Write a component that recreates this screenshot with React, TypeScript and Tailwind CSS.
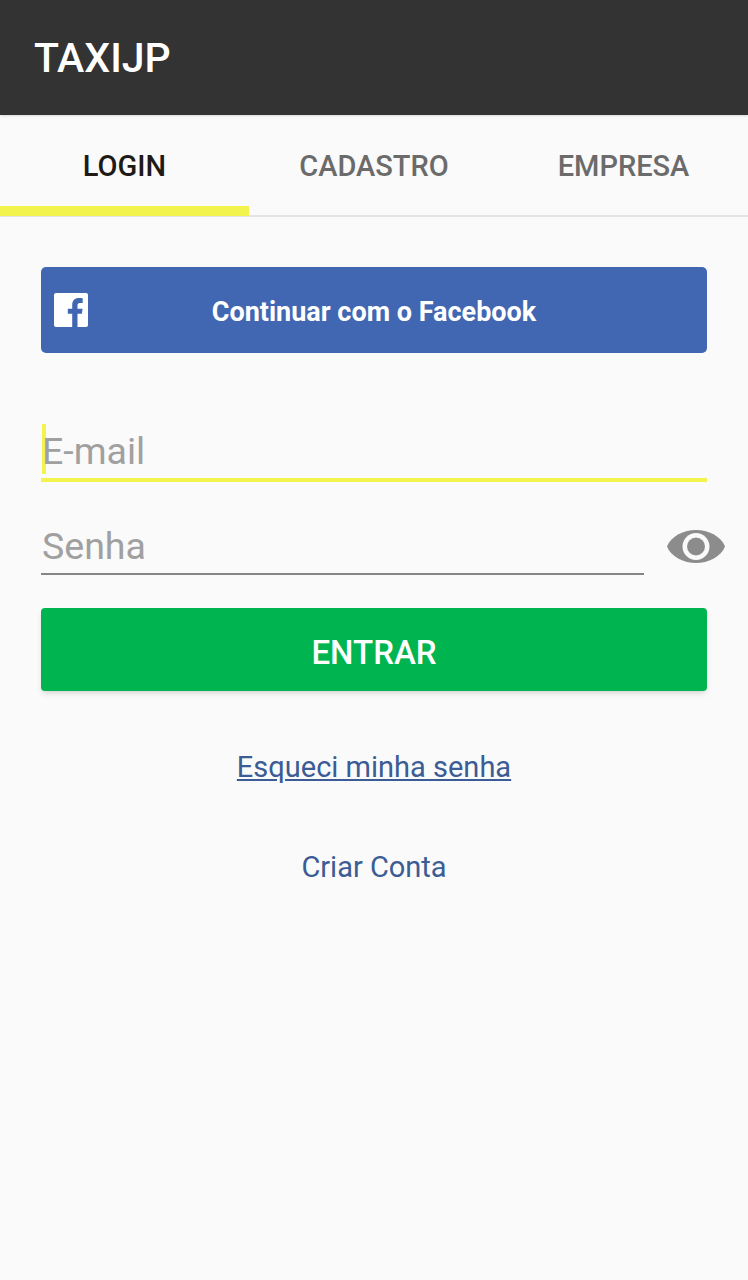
import React from 'react';

function FacebookIcon() {
  return (
    <svg width="34" height="34" viewBox="0 0 34 34" className="absolute left-[13px] top-[26px]">
      <path
        fill="#fff"
        d="M2 0h30a2 2 0 0 1 2 2v30a2 2 0 0 1-2 2h-8.500V20.800h4.400l.7-5.100h-5.100v-3.300c0-1.500.4-2.500 2.500-2.500h2.700V5.300c-.5-.1-2.100-.2-3.900-.2-3.900 0-6.600 2.400-6.600 6.800v3.800h-4.400v5.100h4.400V34H2a2 2 0 0 1-2-2V2a2 2 0 0 1 2-2z"
      />
    </svg>
  );
}

function EyeIcon() {
  return (
    <svg width="58" height="33" viewBox="0 0 58 33" className="block shrink-0">
      <path fill="#8c8c8c" d="M0 16.500C4 6 17 0 29 0s25 6 29 16.500C54 27 41 33 29 33S4 27 0 16.500z" />
      <circle cx="29" cy="16.500" r="13.500" fill="#fafafa" />
      <circle cx="29" cy="16.500" r="9" fill="#8c8c8c" />
    </svg>
  );
}

export default function App() {
  const font = { fontFamily: 'Roboto, "Liberation Sans", sans-serif' };

  return (
    <div className="min-h-[1280px] bg-[#fafafa]" style={font}>
      <header className="flex h-[115px] items-center bg-[#333333] pl-[34px] pt-[2px] shadow-sm">
        <h1 className="text-[41px] font-medium text-white">TAXIJP</h1>
      </header>

      <nav className="flex h-[102px] border-b-2 border-[#e4e4e4]">
        <div className="flex h-[101px] w-[249px] items-center justify-center border-b-[10px] border-[#f2f34c] pt-[12px] text-[29px] font-medium text-[#1f1a17]">
          LOGIN
        </div>
        <div className="flex w-[250px] items-center justify-center pt-[3px] text-[29px] font-medium text-[#6b6b6b]">
          CADASTRO
        </div>
        <div className="flex w-[249px] items-center justify-center pt-[3px] text-[29px] font-medium text-[#6b6b6b]">
          EMPRESA
        </div>
      </nav>

      <main className="flex flex-col px-[41px] pt-[50px]">
        <button className="relative flex h-[86px] w-[666px] items-center justify-center rounded-[5px] bg-[#4267b2] pt-[5px] text-[27px] font-bold text-white">
          <FacebookIcon />
          Continuar com o Facebook
        </button>

        <div className="relative mt-[71px] flex h-[58px] w-[666px] items-center border-b-4 border-[#f2f34c] pl-[1px] text-[37.500px] text-[#a0a0a0]">
          <span className="absolute left-[1px] top-0 h-[50px] w-[4px] bg-[#f2f34c]" />
          <span className="relative">E-mail</span>
        </div>

        <div className="mt-[44px] flex items-center">
          <div className="flex h-[49px] w-[603px] shrink-0 items-center border-b-2 border-[#858585] pb-[7px] pl-[1px] text-[37.500px] text-[#a0a0a0]">
            Senha
          </div>
          <div className="mb-[8px] ml-[23px] shrink-0">
            <EyeIcon />
          </div>
        </div>

        <button className="mt-[33px] flex h-[83px] w-[666px] items-center justify-center rounded-[4px] bg-[#00b54f] pt-[6px] text-[33px] font-medium text-white shadow-md">
          ENTRAR
        </button>

        <a className="mt-[57px] self-center text-[29px] leading-[38px] text-[#3b5c94] underline">
          Esqueci minha senha
        </a>

        <a className="mt-[62px] self-center text-[29px] leading-[38px] text-[#3b5c94]">
          Criar Conta
        </a>
      </main>
    </div>
  );
}
